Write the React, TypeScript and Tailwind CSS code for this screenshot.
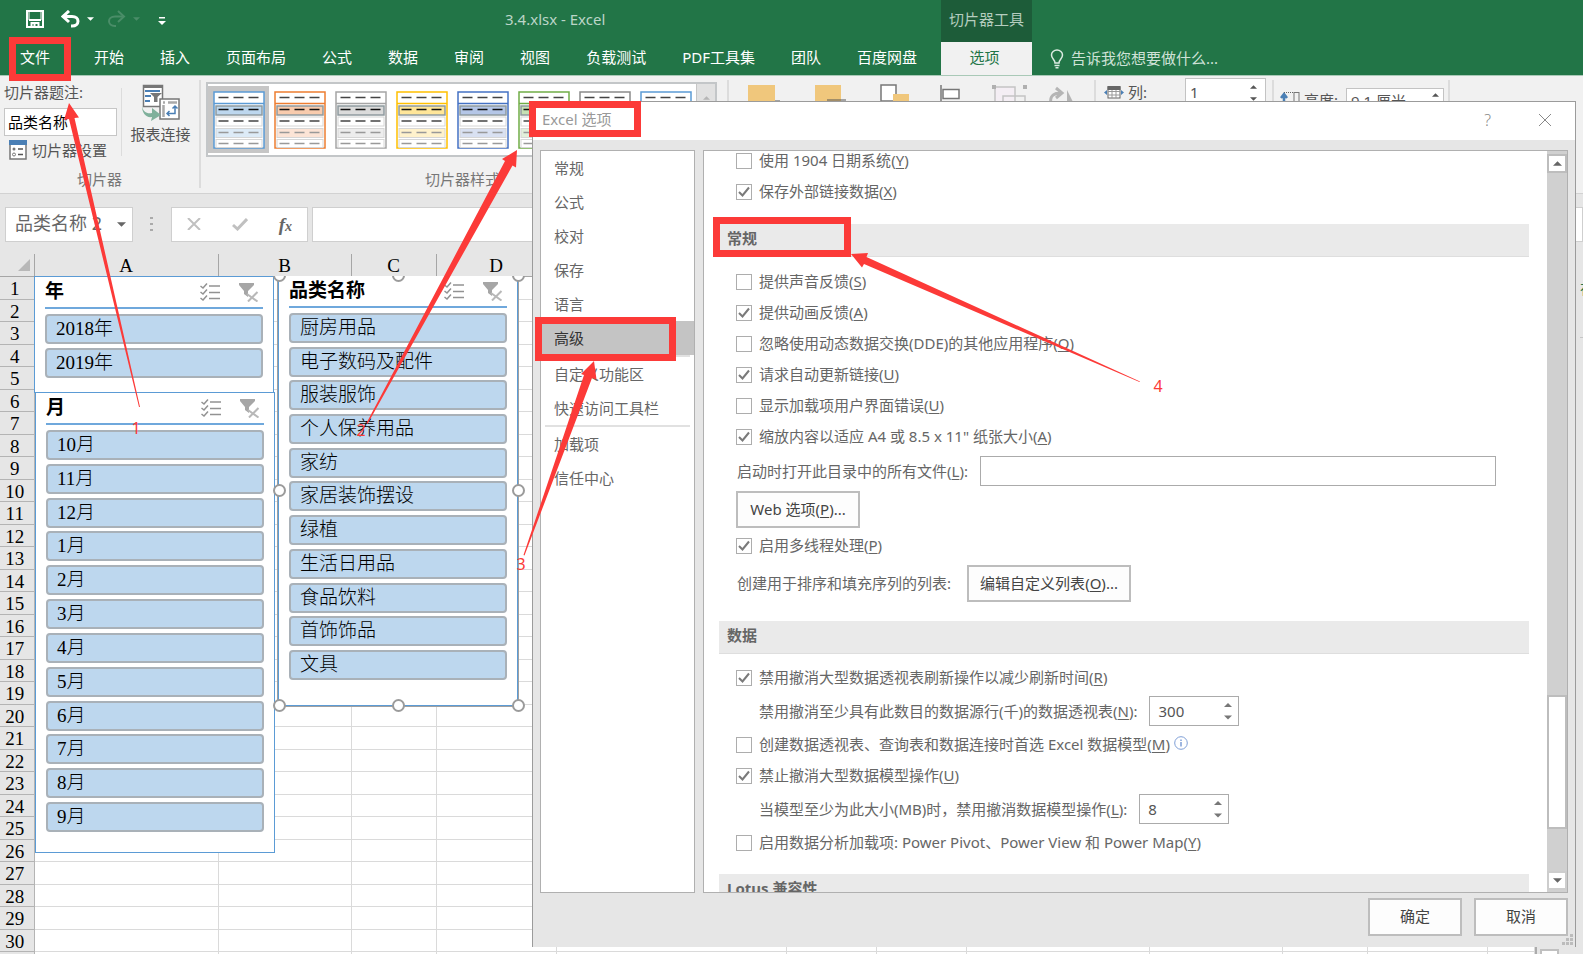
import React, { useState } from 'react';

const SANS = "font-['Noto_Sans','Noto_Sans_CJK_SC',sans-serif]";
const SERIF = "font-['Liberation_Serif','Noto_Sans_CJK_SC',serif]";

const tabs = ['开始', '插入', '页面布局', '公式', '数据', '审阅', '视图', '负载测试', 'PDF工具集', '团队', '百度网盘'];

const styles = [
  { line: '#5b9bd5', head: '#bdd7ee', soft: '#ddebf7' },
  { line: '#ed7d31', head: '#f8cbad', soft: '#fce4d6' },
  { line: '#a5a5a5', head: '#dbdbdb', soft: '#ededed' },
  { line: '#ffc000', head: '#ffe699', soft: '#fff2cc' },
  { line: '#4472c4', head: '#b4c6e7', soft: '#d9e1f2' },
  { line: '#70ad47', head: '#c6e0b4', soft: '#e2efda' },
  { line: '#8a8a8a', head: '#c9c9c9', soft: '#ededed' },
  { line: '#5b9bd5', head: '#bdd7ee', soft: '#ddebf7' },
];

const columns = ['A', 'B', 'C', 'D', 'E', 'F', 'G', 'H', 'I', 'J', 'K', 'L'];
const rows = Array.from({ length: 30 }, (_, i) => i + 1);

const years = ['2018年', '2019年'];
const months = ['10月', '11月', '12月', '1月', '2月', '3月', '4月', '5月', '6月', '7月', '8月', '9月'];
const categories = [
  '厨房用品', '电子数码及配件', '服装服饰', '个人保养用品', '家纺', '家居装饰摆设',
  '绿植', '生活日用品', '食品饮料', '首饰饰品', '文具',
];

const Caret: React.FC<{ className?: string; up?: boolean }> = ({ className = '', up }) => (
  <svg viewBox="0 0 10 5" className={className} fill="currentColor" aria-hidden="true">
    <path d={up ? 'M0 5L5 0L10 5Z' : 'M0 0L5 5L10 0Z'} />
  </svg>
);

const Mnemonic: React.FC<{ text: string; k?: string; tail?: string }> = ({ text, k, tail }) => (
  <span className="whitespace-nowrap">
    {text}
    {k && <>(<span className="underline underline-offset-2">{k}</span>)</>}
    {tail}
  </span>
);

/* ---------- title bar and ribbon ---------- */

const TitleBar: React.FC = () => (
  <header className="flex h-[75px] shrink-0 flex-col bg-[#227547] text-[15px] text-white">
    <div className="flex h-[42px] items-center">
      <div className="flex h-full w-[941px] shrink-0 items-center pb-1">
        <div className="flex flex-1 items-center pl-[26px]">
          <button aria-label="保存" className="mr-[17px]">
            <svg viewBox="0 0 18 18" className="h-[18px] w-[18px]" fill="none" stroke="white" strokeWidth="2">
              <path d="M1 1H17V17H1Z" />
              <path d="M3 10H15M5.500 17V13H12.500V17M8.500 14V17" />
              <path d="M3 1V10M15 1V10" strokeWidth="1" />
            </svg>
          </button>
          <button aria-label="撤消" className="mr-[7px]">
            <svg viewBox="0 0 19 18" className="h-[18px] w-[19px]" fill="none" stroke="white" strokeWidth="3">
              <path d="M2 6.500H11C19 6.500 19 16 11 16H10" />
              <path d="M8 1L2 6.500L8 12" />
            </svg>
          </button>
          <Caret className="mr-[13px] h-[4px] w-[7px]" />
          <button aria-label="恢复" className="mr-[7px]" disabled>
            <svg viewBox="0 0 19 18" className="h-[18px] w-[19px]" fill="none" stroke="#4a8d68" strokeWidth="2">
              <path d="M17 6.500H8C0 6.500 0 16 8 16H9" />
              <path d="M11 1L17 6.500L11 12" />
            </svg>
          </button>
          <Caret className="h-[4px] w-[7px] text-[#4a8d68]" />
          <button aria-label="自定义快速访问工具栏" className="mt-[3px] ml-[18px]">
            <svg viewBox="0 0 8 8" className="h-[8px] w-[8px]" fill="white"><path d="M1 0H7V1.500H1ZM0 4H8L4 8Z" /></svg>
          </button>
        </div>
        <h1 className="w-[436px] text-[#bcd5c8]">3.4.xlsx - Excel</h1>
      </div>
      <div className="flex h-full w-[91px] shrink-0 items-center justify-center bg-[#1d5c39] pb-[3px] text-[#b5cdbf]">切片器工具</div>
    </div>
    <nav className="flex h-[33px] items-stretch">
      <div className="flex w-[941px] shrink-0 items-center gap-9 pb-[3px] pl-5 whitespace-nowrap">
        <button className="mr-2">文件</button>
        {tabs.map((t) => <button key={t}>{t}</button>)}
      </div>
      <button className="h-full w-[91px] shrink-0 bg-[#f1f1f1] pr-1 pb-[3px] text-[#227547]">选项</button>
      <label className="ml-[18px] flex flex-1 items-center gap-[7px]">
        <svg viewBox="0 0 14 20" className="h-[20px] w-[14px]" fill="none" stroke="#dcebe2" strokeWidth="1.500">
          <path d="M5 14C5 10.500 1.500 10 1.500 6A5.500 5 0 0 1 12.500 6C12.500 10 9 10.500 9 14Z" />
          <path d="M4.500 16.500H9.500M5.500 18.800H8.500" />
        </svg>
        <input className="w-48 bg-transparent placeholder-[#cfe2d7] outline-none" placeholder="告诉我您想要做什么..." aria-label="告诉我您想要做什么" />
      </label>
    </nav>
  </header>
);

const StyleThumb: React.FC<{ s: typeof styles[number] }> = ({ s }) => (
  <svg viewBox="0 0 52 58" className="h-[58px] w-[52px]" fill="none">
    <rect x="1" y="1" width="50" height="56" fill="white" stroke={s.line} strokeWidth="1.500" />
    <path d="M1 12.500H51" stroke={s.line} strokeWidth="1.500" />
    <rect x="3" y="15" width="46" height="9" fill={s.head} stroke="#8f9a9f" strokeWidth="1.500" />
    <rect x="3" y="26" width="46" height="9" stroke="#d6d6d6" />
    <rect x="3" y="37.500" width="46" height="9" fill={s.soft} stroke="#d6d6d6" />
    <rect x="3" y="48.500" width="46" height="8" stroke="#d6d6d6" />
    <g strokeWidth="1.500" strokeDasharray="10 5">
      <path d="M5.500 6.500H46" stroke="#444" />
      <path d="M5.500 18.500H46" stroke="#111" />
      <path d="M5.500 30H46" stroke="#444" />
      <path d="M5.500 41.500H46M5.500 52.500H46" stroke="#999" />
    </g>
  </svg>
);

const Divider: React.FC = () => <div className="mt-1 h-[108px] w-[2px] shrink-0 bg-[#dcdcdc]" />;

const Ribbon: React.FC = () => (
  <section className="flex h-[119px] shrink-0 border-t border-b border-t-[#a9c9b7] border-b-[#d2d2d2] bg-[#f1f1f1] text-[15px] text-[#555]">
    <div className="flex w-[199px] shrink-0 flex-col">
      <div className="flex">
        <div className="flex w-[121px] flex-col pl-1">
          <label htmlFor="caption" className="mt-1 h-[28px] leading-[24px]">切片器题注:</label>
          <input id="caption" defaultValue="品类名称" className="h-[28px] w-[113px] border border-[#c6c6c6] bg-white px-[3px] pb-[2px] text-black outline-none" />
          <button className="mt-1 ml-[5px] flex items-center gap-[5px] leading-[20px] whitespace-nowrap">
            <svg viewBox="0 0 18 20" className="h-[20px] w-[18px] shrink-0" fill="none">
              <rect x="1" y="1" width="16" height="18" fill="white" stroke="#777" strokeWidth="1.500" />
              <path d="M0 0H18V5H0Z" fill="#4a7fb5" />
              <circle cx="5" cy="9" r="1.500" fill="#777" />
              <circle cx="5" cy="14.500" r="1.500" stroke="#777" />
              <path d="M9 9H14M9 14.500H14" stroke="#555" strokeWidth="1.500" />
            </svg>
            切片器设置
          </button>
        </div>
        <div className="mt-3 h-[68px] w-px bg-[#dcdcdc]" />
        <button className="flex flex-1 flex-col items-center pt-2">
          <svg viewBox="0 0 38 37" className="h-[37px] w-[38px]" fill="none">
            <rect x="1.500" y="1.500" width="19" height="21" fill="white" stroke="#777" strokeWidth="1.500" />
            <path d="M1 1H21V4H1Z" fill="#777" />
            <path d="M3 7H18M3 12H9M3 17H8" stroke="#4a7fb5" strokeWidth="2" />
            <path d="M8 9H20L15.500 13V18H12V13Z" fill="#777" />
            <rect x="18" y="15" width="19" height="20" fill="white" stroke="#777" strokeWidth="1.500" />
            <path d="M21 18.500H23M26 18.500H35M21.500 21V33" stroke="#aaa" strokeWidth="2.500" />
            <path d="M33 22V29.500H25M30.500 24.500L33 22L35.500 24.500M27.500 27L25 29.500L27.500 32" stroke="#4a7fb5" strokeWidth="1.500" />
            <path d="M0 22C1 28 5 30 10 29V24L19 31L9 37L10 33C4 34 0 29 0 22Z" fill="#7fb09b" />
          </svg>
          <span className="mt-[3px] leading-[20px]">报表连接</span>
        </button>
      </div>
      <div className="mt-auto mb-[4px] text-center leading-[20px] text-[#777]">切片器</div>
    </div>
    <Divider />
    <div className="flex w-[526px] shrink-0 flex-col pl-[5px]">
      <div className="mt-[6px] flex h-[75px] w-[511px] border-2 border-[#c3c6c8] bg-white">
        {styles.map((s, i) => (
          <button
            key={i}
            aria-label={`切片器样式 ${i + 1}`}
            className={`my-[2px] flex w-[61px] shrink-0 items-center justify-center ${i === 0 ? 'bg-[#c6c6c6]' : ''}`}
          >
            <StyleThumb s={s} />
          </button>
        ))}
        <button aria-label="上一行" className="flex flex-1 justify-center border-l border-[#c6c6c6] bg-[#e1e1e1] pt-3 text-[#b5b5b5]">
          <Caret up className="h-[4px] w-[7px]" />
        </button>
      </div>
      <div className="mt-auto mb-[4px] pr-2 text-center leading-[20px] text-[#777]">切片器样式</div>
    </div>
    <Divider />
    <div className="flex w-[365px] shrink-0 items-start pt-2 pl-[19px]">
      <svg viewBox="0 0 330 24" className="h-[24px] w-[330px]" fill="none">
        <path d="M0 1H27V24H0ZM67 1H93V24H67Z" fill="#f0c77c" />
        <path d="M27 17H32M79 16H98" stroke="#555" />
        <rect x="133" y="1" width="15" height="16" fill="white" stroke="#777" strokeWidth="1.500" />
        <path d="M145 10H161V24H145Z" fill="#f0c77c" />
        <path d="M193 1V24" stroke="#777" strokeWidth="1.500" />
        <rect x="195" y="5.500" width="16" height="9" fill="white" stroke="#777" strokeWidth="1.500" />
        <rect x="247" y="3" width="20" height="18" fill="#f4eef4" stroke="#c4c4c4" strokeWidth="1.500" />
        <rect x="255" y="12" width="22" height="12" stroke="#c4c4c4" strokeWidth="1.500" />
        <path d="M244 1H248V5H244ZM275 1H279V5H275Z" fill="#b0b0b0" />
        <path d="M303 20C301 11 307 9 313 9M308 4L314 9L308 14" stroke="#b5b5b5" strokeWidth="3" />
        <path d="M319 6L328 24H319Z" fill="#b5b5b5" />
      </svg>
    </div>
    <Divider />
    <div className="flex w-[176px] shrink-0 items-start pt-[2px] pl-2">
      <label htmlFor="cols" className="mt-[4px] flex w-[81px] items-center gap-1 leading-[20px]">
        <svg viewBox="0 0 20 13" className="h-[13px] w-[20px]" fill="none">
          <rect x="4" y="1" width="12" height="11" fill="white" stroke="#666" />
          <path d="M4 5.500H16M4 9H16M8 3V12M12 3V12" stroke="#999" />
          <path d="M3.500 0H16.500V4H3.500Z" fill="#666" />
          <path d="M0 6.500L3 4V9ZM20 6.500L17 4V9Z" fill="#4a7fb5" />
        </svg>
        列:
      </label>
      <div className="flex h-[30px] w-[81px] items-center border border-[#c3c3c3] bg-white pr-2">
        <input id="cols" defaultValue="1" className="w-0 flex-1 pb-[2px] pl-1 outline-none" />
        <div className="flex flex-col gap-2"><Caret up className="h-[4px] w-[7px]" /><Caret className="h-[4px] w-[7px]" /></div>
      </div>
    </div>
    <Divider />
    <div className="flex w-[174px] shrink-0 items-start pt-[12px] pl-[6px]">
      <label htmlFor="height" className="flex w-[66px] shrink-0 items-center gap-1 leading-[24px]">
        <svg viewBox="0 0 20 18" className="h-[18px] w-[20px] shrink-0" fill="none">
          <path d="M4 16V4M1 7L4 3L7 7" stroke="#4a7fb5" strokeWidth="2.500" />
          <path d="M4 1.500H13" stroke="#666" strokeDasharray="1 1" />
          <rect x="14" y="1.500" width="5" height="15" stroke="#777" />
        </svg>
        <span className="whitespace-nowrap">高度:</span>
      </label>
      <div className="flex h-[26px] w-[98px] items-center border border-[#c3c3c3] bg-white pr-1">
        <input id="height" defaultValue="9.1 厘米" className="w-0 flex-1 pl-1 outline-none" />
        <div className="flex flex-col gap-2"><Caret up className="h-[4px] w-[7px]" /><Caret className="h-[4px] w-[7px]" /></div>
      </div>
    </div>
    <Divider />
  </section>
);

const FormulaBar: React.FC = () => (
  <section className="flex h-[60px] shrink-0 items-center bg-[#e6e6e6] pl-[5px]">
    <div className="flex h-[35px] w-[128px] shrink-0 items-center border border-[#cfcfcf] bg-white pr-[6px] text-[#666]">
      <input aria-label="名称框" defaultValue="品类名称 2" className="w-0 flex-1 pb-[2px] pl-[9px] text-[18px] outline-none" />
      <Caret className="h-[5px] w-[9px]" />
    </div>
    <svg viewBox="0 0 3 15" className="ml-[17px] h-[15px] w-[3px]" fill="#aaa"><path d="M0 0H3V2H0ZM0 6H3V8H0ZM0 12H3V14H0Z" /></svg>
    <div className="ml-[18px] flex h-[35px] w-[137px] shrink-0 items-center justify-between border border-[#cfcfcf] bg-white pr-[15px] pl-[15px]">
      <button aria-label="取消输入">
        <svg viewBox="0 0 14 12" className="h-[12px] w-[14px]" stroke="#c0c0c0" strokeWidth="2"><path d="M1 0L13 12M13 0L1 12" /></svg>
      </button>
      <button aria-label="输入">
        <svg viewBox="0 0 16 13" className="h-[13px] w-[16px]" fill="none" stroke="#c0c0c0" strokeWidth="3"><path d="M1 7L5.500 11L15 1" /></svg>
      </button>
      <button className="font-['Liberation_Serif',serif] text-[19px] leading-none font-bold text-[#666] italic">
        f<span className="text-[14px]">x</span>
      </button>
    </div>
    <input aria-label="编辑栏" className="ml-1 h-[35px] flex-1 border border-[#cfcfcf] bg-white px-2 outline-none" />
  </section>
);

/* ---------- worksheet ---------- */

const Grid: React.FC = () => (
  <table className={`w-full table-fixed border-collapse text-[19px] ${SERIF}`}>
    <colgroup>
      <col className="w-[34px]" />
      <col className="w-[184px]" />
      <col className="w-[133px]" />
      <col className="w-[85px]" />
      <col className="w-[120px]" />
      <col className="w-[230px]" />
      <col className="w-[90px]" />
      <col className="w-[90px]" />
      <col className="w-[183px]" />
      <col className="w-[133px]" />
      <col className="w-[85px]" />
      <col className="w-[120px]" />
      <col />
    </colgroup>
    <thead>
      <tr className="h-[22px] bg-[#e6e6e6]">
        <th className="border-b border-[#a6a6a6] p-0">
          <svg viewBox="0 0 12 12" className="ml-[18px] h-[12px] w-[12px]" fill="#b8b8b8"><path d="M12 0V12H0Z" /></svg>
        </th>
        {columns.map((c) => (
          <th key={c} className="border-r border-b border-l border-[#a6a6a6] p-0 pt-[3px] leading-[18px] font-normal">{c}</th>
        ))}
      </tr>
    </thead>
    <tbody>
      {rows.map((r) => (
        <tr key={r} className="odd:h-[23px] even:h-[22px]">
          <th className="border-r border-b border-[#b4b4b4] bg-[#e6e6e6] p-0 pt-[2px] pr-1 leading-[19px] font-normal">{r}</th>
          {columns.map((c) => <td key={c} className="border border-[#dadada] p-0" />)}
        </tr>
      ))}
      <tr className="h-[23px]">
        <th className="border-r border-[#b4b4b4] bg-[#e6e6e6] p-0" />
        {columns.map((c) => <td key={c} className="border border-[#dadada] p-0" />)}
      </tr>
    </tbody>
  </table>
);

type SlicerProps = { title: string; items: string[]; place: string; list: string };

const Slicer: React.FC<SlicerProps> = ({ title, items, place, list }) => (
  <section className={`absolute border border-[#5b9bd5] bg-white ${SERIF} ${place}`}>
    <div className="mx-[10px] flex h-[32px] items-center border-b-2 border-[#6fa8dc]">
      <h2 className="flex-1 text-[19px] leading-[24px] font-bold text-black">{title}</h2>
      <button aria-label={`${title} 多选`}>
        <svg viewBox="0 0 20 18" className="h-[18px] w-[20px]" fill="none" stroke="#929292" strokeWidth="1.500">
          <path d="M0.500 3L3 5L7 0.500M0.500 9L3 11L7 6.500M0.500 15L3 17L7 12.500M9 3H20M9 9.500H20M9 15.500H20" />
        </svg>
      </button>
      <button aria-label={`${title} 清除筛选器`} className="ml-[19px] mr-[4px]">
        <svg viewBox="0 0 20 20" className="h-[20px] w-[20px]" fill="none">
          <path d="M0 1H15V3L9 9V15L5 12V9L0 3Z" fill="#a6a6a6" />
          <path d="M8 12L18.500 19.500M18.500 10L9 19.500" stroke="#b8b8b8" strokeWidth="2" />
        </svg>
      </button>
    </div>
    <div className={`mx-[10px] mt-[5px] flex flex-col justify-between ${list}`}>
      {items.map((item) => (
        <button key={item} className="h-[30px] rounded-[4px] border-2 border-[#a9b1b8] bg-[#bdd7ee] px-[9px] text-left text-[19px] leading-[26px] font-light text-black">
          {item}
        </button>
      ))}
    </div>
  </section>
);

const Handle: React.FC<{ at: string }> = ({ at }) => (
  <span className={`absolute h-[13px] w-[13px] rounded-full border-2 border-[#9b9b9b] bg-white ${at}`} />
);

const Worksheet: React.FC = () => (
  <main className="flex min-h-0 flex-1">
    <div className="relative min-w-0 flex-1 overflow-hidden bg-white">
      <Grid />
      <div className="absolute inset-x-0 top-[22px] bottom-0 overflow-hidden">
        <Slicer title="年" items={years} place="top-0 left-[34px] h-[117px] w-[240px]" list="h-[64px]" />
        <Slicer title="月" items={months} place="top-[116px] left-[35px] h-[461px] w-[240px]" list="h-[402px]" />
        <Slicer title="品类名称" items={categories} place="top-[-1px] left-[278px] h-[431px] w-[240px] ring-1 ring-[#a0a0a0]" list="h-[367px]" />
        <Handle at="top-[-7px] left-[273px]" />
        <Handle at="top-[-7px] left-[392px]" />
        <Handle at="top-[-7px] left-[512px]" />
        <Handle at="top-[208px] left-[273px]" />
        <Handle at="top-[208px] left-[512px]" />
        <Handle at="top-[423px] left-[273px]" />
        <Handle at="top-[423px] left-[392px]" />
        <Handle at="top-[423px] left-[512px]" />
      </div>
    </div>
    <div className="flex w-[28px] shrink-0 flex-col justify-end border-l-2 border-[#ababab] bg-[#e6e6e6] px-[3px]">
      <div className="h-[5px] w-[19px] border-2 border-b-0 border-[#c0c0c0] bg-white" />
    </div>
    <aside className="flex w-[20px] shrink-0 flex-col items-end bg-[#e6e6e6]">
      <div className="mt-[26px] h-[16px] w-[3px] overflow-hidden text-[15px] leading-[16px] text-[#217346]">在</div>
      <div className="mt-[41px] h-px w-[3px] bg-[#c6c6c6]" />
    </aside>
  </main>
);

/* ---------- options dialog ---------- */

const navGroups = [
  ['常规', '公式', '校对', '保存', '语言', '高级'],
  ['自定义功能区', '快速访问工具栏'],
  ['加载项', '信任中心'],
];

const Check: React.FC<{ text: string; k: string; on?: boolean; children?: React.ReactNode }> = ({ text, k, on, children }) => (
  <div className="flex h-[31px] items-center pl-[17px]">
    <label className="flex items-center gap-[7px]">
      <span className="grid h-[16px] w-[16px] shrink-0 place-items-center">
        <input type="checkbox" defaultChecked={on} className="peer col-start-1 row-start-1 h-[16px] w-[16px] appearance-none border border-[#adadad] bg-white" />
        <svg viewBox="0 0 12 12" className="pointer-events-none col-start-1 row-start-1 hidden h-[12px] w-[12px] peer-checked:block" fill="none" stroke="#7a7a7a" strokeWidth="2">
          <path d="M1 6L4.500 9.500L11 1.500" />
        </svg>
      </span>
      <Mnemonic text={text} k={k} />
    </label>
    {children}
  </div>
);

const Section: React.FC<{ title: string }> = ({ title }) => (
  <h3 className="h-[33px] border-b border-[#dedede] bg-[#eaeaea] pl-2 text-[15px] leading-[29px] font-bold text-[#666]">{title}</h3>
);

const Spinner: React.FC<{ id: string; value: string }> = ({ id, value }) => (
  <div className="flex h-[30px] w-[90px] items-center border border-[#ababab] bg-white pr-[6px] text-[#777]">
    <input id={id} defaultValue={value} className="w-0 flex-1 pl-2 text-[#555] outline-none" />
    <div className="flex flex-col gap-2">
      <button aria-label="增加"><Caret up className="h-[4px] w-[8px]" /></button>
      <button aria-label="减少"><Caret className="h-[5px] w-[8px]" /></button>
    </div>
  </div>
);

const dialogButton = 'border-2 border-[#bdbdbd] bg-[#fdfdfd] text-[#444]';

const OptionsDialog: React.FC = () => {
  const [active, setActive] = useState('高级');

  return (
    <div role="dialog" aria-label="Excel 选项" className="absolute top-[101px] right-[7px] bottom-[7px] left-[532px] flex flex-col border border-b-0 border-[#9b9b9b] bg-[#e6e6e6] text-[15px] text-[#666]">
      <div className="flex h-[38px] shrink-0 items-center bg-white pr-[23px] pb-[3px] pl-[9px]">
        <h2 className="flex-1 text-[#999]">Excel 选项</h2>
        <button aria-label="帮助" className="mr-[47px] text-[16px] font-light text-[#888]">?</button>
        <button aria-label="关闭">
          <svg viewBox="0 0 14 14" className="h-[14px] w-[14px]" stroke="#888"><path d="M1 1L13 13M13 1L1 13" /></svg>
        </button>
      </div>

      <div className="flex min-h-0 flex-1 gap-2 px-[7px] pt-[10px]">
        <nav className="flex w-[155px] shrink-0 flex-col border border-[#b0b0b0] bg-white">
          {navGroups.map((group, i) => (
            <div key={i} className="flex flex-col">
              {i > 0 && <hr className="mx-1 border-t-2 border-[#e1e1e1]" />}
              {group.map((item) => (
                <button
                  key={item}
                  onClick={() => setActive(item)}
                  className={`h-[34px] pl-[13px] text-left leading-[32px] ${item === active ? 'bg-[#c4c4c4] text-[#333]' : ''}`}
                >
                  {item}
                </button>
              ))}
            </div>
          ))}
        </nav>

        <div className="flex min-w-0 flex-1 border border-[#b0b0b0] bg-white">
          <div className="flex min-w-0 flex-1 flex-col overflow-hidden pr-[18px] pl-[15px] *:shrink-0">
            <div className="-mt-[6px] mb-[17px]">
              <Check text="使用 1904 日期系统" k="Y" />
              <Check text="保存外部链接数据" k="X" on />
            </div>
            <Section title="常规" />
            <div className="mt-[9px]">
              <Check text="提供声音反馈" k="S" />
              <Check text="提供动画反馈" k="A" on />
              <Check text="忽略使用动态数据交换(DDE)的其他应用程序" k="O" />
              <Check text="请求自动更新链接" k="U" on />
              <Check text="显示加载项用户界面错误" k="U" />
              <Check text={'缩放内容以适应 A4 或 8.5 x 11" 纸张大小'} k="A" on />
            </div>
            <div className="mt-1 flex items-center gap-3 pr-[33px] pl-[18px]">
              <label htmlFor="startup"><Mnemonic text="启动时打开此目录中的所有文件" k="L" tail=":" /></label>
              <input id="startup" className="h-[30px] min-w-0 flex-1 border border-[#ababab] bg-white px-2 outline-none" />
            </div>
            <button className={`mt-[5px] ml-[17px] h-[37px] w-[124px] ${dialogButton}`}>
              <Mnemonic text="Web 选项" k="P" tail="..." />
            </button>
            <div className="mt-[2px]">
              <Check text="启用多线程处理" k="P" on />
            </div>
            <div className="mt-[4px] mb-[19px] flex items-center gap-4 pl-[18px]">
              <span>创建用于排序和填充序列的列表:</span>
              <button className={`h-[37px] w-[164px] ${dialogButton}`}>
                <Mnemonic text="编辑自定义列表" k="O" tail="..." />
              </button>
            </div>
            <Section title="数据" />
            <div className="mt-[8px]">
              <Check text="禁用撤消大型数据透视表刷新操作以减少刷新时间" k="R" on />
            </div>
            <div className="my-[3px] flex items-center gap-3 pl-[40px]">
              <label htmlFor="rows"><Mnemonic text="禁用撤消至少具有此数目的数据源行(千)的数据透视表" k="N" tail=":" /></label>
              <Spinner id="rows" value="300" />
            </div>
            <Check text="创建数据透视表、查询表和数据连接时首选 Excel 数据模型" k="M">
              <svg viewBox="0 0 14 14" className="mb-1 ml-1 h-[14px] w-[14px]" fill="none" stroke="#7f9fd6">
                <circle cx="7" cy="7" r="6.300" />
                <path d="M7 6V10.500M7 3.500V5" strokeWidth="1.500" />
              </svg>
            </Check>
            <Check text="禁止撤消大型数据模型操作" k="U" on />
            <div className="my-[3px] flex items-center gap-3 pl-[40px]">
              <label htmlFor="size"><Mnemonic text="当模型至少为此大小(MB)时，禁用撤消数据模型操作" k="L" tail=":" /></label>
              <Spinner id="size" value="8" />
            </div>
            <Check text="启用数据分析加载项: Power Pivot、Power View 和 Power Map" k="Y" />
            <div className="mt-[16px]"><Section title="Lotus 兼容性" /></div>
          </div>
          <div className="flex w-[20px] shrink-0 flex-col bg-[#d0d0d0] pt-[3px]">
            <button aria-label="向上滚动" className="flex h-[19px] items-center justify-center border-2 border-[#bdbdbd] bg-white text-[#666]">
              <Caret up className="h-[5px] w-[9px]" />
            </button>
            <div className="flex-1" />
            <div className="h-[134px] border-2 border-[#bdbdbd] bg-white" />
            <div className="h-[42px]" />
            <button aria-label="向下滚动" className="mb-[2px] flex h-[19px] items-center justify-center border-2 border-[#cdcdcd] bg-white text-[#666]">
              <Caret className="h-[5px] w-[9px]" />
            </button>
          </div>
        </div>
      </div>

      <div className="flex h-[54px] shrink-0 justify-end gap-[12px] pt-[5px] pr-[7px]">
        <button className={`h-[38px] w-[94px] pb-[2px] ${dialogButton}`}>确定</button>
        <button className={`h-[38px] w-[94px] pb-[2px] ${dialogButton}`}>取消</button>
      </div>
      <svg viewBox="0 0 11 11" className="absolute right-[2px] bottom-[2px] h-[11px] w-[11px]" fill="#bcbcbc">
        <path d="M8 0H11V3H8ZM8 4H11V7H8ZM8 8H11V11H8ZM4 4H7V7H4ZM4 8H7V11H4ZM0 8H3V11H0Z" />
      </svg>
    </div>
  );
};

/* ---------- numbered walkthrough marks ---------- */

const Marks: React.FC = () => (
  <svg className="pointer-events-none absolute top-0 left-0 h-[954px] w-[1583px]" viewBox="0 0 1583 954" fill="none">
    <g stroke="#fc3a38" strokeWidth="7">
      <rect x="12.500" y="40.500" width="55" height="37" />
      <rect x="532.500" y="104.500" width="105" height="29" />
      <rect x="716.500" y="220.500" width="131" height="33" />
      <rect x="538.500" y="320.500" width="134" height="37" />
    </g>
    <g fill="#fc3a38">
      <path d="M69 103L79 117.500L74.500 118L140 407L139 407L69 119L64 120Z" />
      <path d="M517 150L516 167.500L512.500 165.500L367.500 424L366.500 423L505 161L502 159Z" />
      <path d="M594 361L596.500 379.500L592 378L524.500 555.500L523.500 555L584 375L581 374Z" />
      <path d="M851 254L868 253L866.500 257L1140 381.500L1139.500 382L864 264L862 267.500Z" />
    </g>
    <g fill="#fc3a38" fontSize="16" textAnchor="middle" className={SANS}>
      <text x="136" y="434">1</text>
      <text x="361" y="436">2</text>
      <text x="521" y="570">3</text>
      <text x="1158" y="392">4</text>
    </g>
  </svg>
);

const App: React.FC = () => (
  <div className={`relative flex h-screen flex-col overflow-hidden bg-[#e6e6e6] ${SANS}`}>
    <TitleBar />
    <Ribbon />
    <FormulaBar />
    <Worksheet />
    <OptionsDialog />
    <Marks />
  </div>
);

export default App;
